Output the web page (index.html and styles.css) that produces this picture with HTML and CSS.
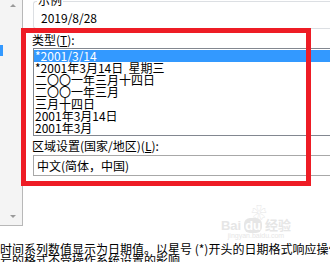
FILE: index.html
```html
<!DOCTYPE html>
<html>
<head>
<meta charset="utf-8">
<link rel="stylesheet" href="styles.css">
</head>
<body>
<div class="page">
  <div class="top">
    <div class="side">
      <div class="sel-mark"></div>
      <div class="scroll">
        <span class="arrow up"></span>
        <span class="arrow down"></span>
      </div>
    </div>
    <div class="main">
      <div class="group">
        <span class="legend">示例</span>
        <div class="sample">2019/8/28</div>
      </div>
      <div class="label">类型(<u>T</u>):</div>
      <div class="list">
        <div class="row selected">*2001/3/14</div>
        <div class="row">*2001年3月14日&nbsp;&nbsp;星期三</div>
        <div class="row">二〇〇一年三月十四日</div>
        <div class="row">二〇〇一年三月</div>
        <div class="row">三月十四日</div>
        <div class="row">2001年3月14日</div>
        <div class="row">2001年3月</div>
      </div>
      <div class="label label2">区域设置(国家/地区)(<u>L</u>):</div>
      <div class="combo">中文(简体，中国)</div>
    </div>
    <div class="highlight"></div>
  </div>
  <div class="watermark">
    <div class="paw">❀</div>
    <div class="wm-text">Bai<span class="du">du</span>经验</div>
    <div class="wm-url">jingyan.baidu.com</div>
  </div>
  <div class="desc">
    <div class="line">时间系列数值显示为日期值。以星号 (*)开头的日期格式响应操作</div>
    <div class="line line2">号的格式不受操作系统设置的影响。</div>
  </div>
</div>
</body>
</html>
```

FILE: styles.css
```css
html, body {
  margin: 0;
  padding: 0;
  background: #ffffff;
}
.page {
  position: relative;
  width: 330px;
  height: 262px;
  overflow: hidden;
  font-family: "Noto Sans CJK SC", "Liberation Sans", sans-serif;
  font-size: 12px;
  color: #000;
}
.top {
  position: relative;
  display: flex;
  height: 226px;
}
.side {
  position: relative;
  width: 22px;
  height: 225px;
  background: #f4f4f4;
  border-right: 1px solid #b8b8b8;
  border-bottom: 1px solid #b8b8b8;
  flex: none;
}
.sel-mark {
  position: absolute;
  left: 0;
  top: 45px;
  width: 3px;
  height: 11px;
  background: #3399ff;
}
.scroll {
  position: absolute;
  inset: 0;
}
.arrow {
  position: absolute;
  left: 10px;
  width: 0;
  height: 0;
  border-left: 3px solid transparent;
  border-right: 3px solid transparent;
}
.arrow.up {
  top: 4px;
  border-bottom: 3px solid #9a9a9a;
}
.arrow.down {
  top: 215px;
  border-top: 3px solid #9a9a9a;
}
.main {
  flex: 1;
  padding-left: 10px;
  display: flex;
  flex-direction: column;
}
.group {
  position: relative;
  margin-top: 1px;
  height: 26px;
  border: 1px solid #dcdfe3;
  border-right: none;
  border-radius: 3px 0 0 3px;
}
.legend {
  position: absolute;
  left: 3px;
  top: -9px;
  padding: 0 1px;
  background: #fff;
  line-height: 14px;
}
.sample {
  padding-left: 7px;
  margin-top: 9px;
  line-height: 14px;
}
.label {
  margin-top: 4px;
  line-height: 14px;
  margin-left: -1px;
}
.list {
  margin-top: 1px;
  border: 1px solid #828790;
  border-right: none;
  padding: 1px 0;
  height: 84px;
}
.row {
  height: 12px;
  line-height: 12px;
  padding-left: 1px;
  white-space: nowrap;
}
.row.selected {
  background: #3399ff;
  color: #fff;
}
.label2 {
  margin-top: 3px;
}
.combo {
  margin-top: 2px;
  height: 19px;
  border: 1px solid #a8a8a8;
  border-right: none;
  line-height: 19px;
  padding-left: 3px;
}
.highlight {
  position: absolute;
  left: 21px;
  top: 28px;
  width: 280px;
  height: 148px;
  border: 5px solid #ee1c25;
}
.watermark {
  position: absolute;
  left: 208px;
  top: 204px;
  width: 96px;
  text-align: center;
  color: #e6e6e6;
  white-space: nowrap;
}
.paw {
  font-size: 15px;
  line-height: 15px;
  margin-left: 6px;
}
.wm-text {
  font-family: "Liberation Sans", "Noto Sans CJK SC", sans-serif;
  font-size: 13px;
  font-weight: bold;
  line-height: 13px;
}
.wm-text .du {
  color: #fff;
  background: #e6e6e6;
  border-radius: 6px;
  padding: 0 1px;
  margin: 0 3px;
}
.wm-url {
  font-size: 7px;
  line-height: 8px;
  font-family: "Liberation Sans", sans-serif;
}
.desc {
  position: relative;
  margin-top: 17px;
  white-space: nowrap;
}
.line {
  height: 11px;
  line-height: 12px;
}
```
